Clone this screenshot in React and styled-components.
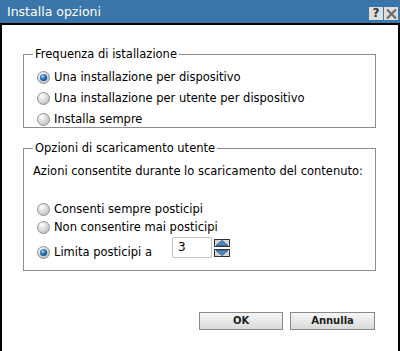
import React from "react";
import styled, { createGlobalStyle } from "styled-components";

const FONT = `"DejaVu Sans", Verdana, sans-serif`;

const FREQUENCY = [
  { label: "Una installazione per dispositivo", checked: true },
  { label: "Una installazione per utente per dispositivo", checked: false },
  { label: "Installa sempre", checked: false },
];

const DOWNLOAD = [
  { label: "Consenti sempre posticipi", checked: false },
  { label: "Non consentire mai posticipi", checked: false },
];

function Radio({ checked }) {
  return (
    <RadioIcon width="13" height="13" viewBox="0 0 13 13">
      <defs>
        <radialGradient id="ring" cx="0.35" cy="0.3" r="0.8">
          <stop offset="0" stopColor="#ffffff" />
          <stop offset="1" stopColor="#b9b9b9" />
        </radialGradient>
        <radialGradient id="dot" cx="0.4" cy="0.35" r="0.7">
          <stop offset="0" stopColor="#a9dcff" />
          <stop offset="0.45" stopColor="#2f7fc4" />
          <stop offset="1" stopColor="#0b3f78" />
        </radialGradient>
      </defs>
      <circle cx="6.5" cy="6.5" r="6" fill="url(#ring)" stroke="#929292" />
      {checked && <circle cx="6.5" cy="6.5" r="3.6" fill="url(#dot)" />}
    </RadioIcon>
  );
}

function Option({ label, checked }) {
  return (
    <OptionRow>
      <Radio checked={checked} />
      <span>{label}</span>
    </OptionRow>
  );
}

function Arrow({ up }) {
  return (
    <svg width="14" height="6" viewBox="0 0 14 6">
      <polygon
        points={up ? "7,0.5 13,5.5 1,5.5" : "1,0.5 13,0.5 7,5.5"}
        fill="#4b89c4"
        stroke="#2a5886"
        strokeWidth="0.8"
      />
    </svg>
  );
}

function App() {
  return (
    <>
      <GlobalStyle />
      <Window>
        <TitleBar>
          <Title>Installa opzioni</Title>
          <TitleButtons>
            <TitleButton>?</TitleButton>
            <TitleButton>
              <svg width="11" height="10" viewBox="0 0 11 10">
                <path d="M1 0.5 L10 9.5 M10 0.5 L1 9.5" stroke="#6d6d6d" strokeWidth="2.2" />
              </svg>
            </TitleButton>
          </TitleButtons>
        </TitleBar>

        <Body>
          <Group>
            <Legend>Frequenza di istallazione</Legend>
            <Options $gap={5}>
              {FREQUENCY.map((opt) => (
                <Option key={opt.label} {...opt} />
              ))}
            </Options>
          </Group>

          <Group $spaced>
            <Legend>Opzioni di scaricamento utente</Legend>
            <Note>Azioni consentite durante lo scaricamento del contenuto:</Note>
            <Options $gap={2} $top={22} $bottom={12}>
              {DOWNLOAD.map((opt) => (
                <Option key={opt.label} {...opt} />
              ))}
              <LimitRow>
                <LimitLabel>
                  <Radio checked />
                  <span>Limita posticipi a</span>
                </LimitLabel>
                <NumberInput>3</NumberInput>
                <Spinner>
                  <SpinButton>
                    <Arrow up />
                  </SpinButton>
                  <SpinButton>
                    <Arrow />
                  </SpinButton>
                </Spinner>
              </LimitRow>
            </Options>
          </Group>

          <Footer>
            <Button $width={84}>OK</Button>
            <Button $width={85}>Annulla</Button>
          </Footer>
        </Body>
      </Window>
    </>
  );
}

const GlobalStyle = createGlobalStyle`
  html, body {
    margin: 0;
    padding: 0;
    background: #fff;
  }

  body {
    font-family: ${FONT};
    font-size: 11.5px;
    color: #000;
  }
`;

const Window = styled.div`
  display: flex;
  flex-direction: column;
  width: 400px;
  height: 351px;
  overflow: hidden;
  background: #fff;
`;

const TitleBar = styled.div`
  display: flex;
  justify-content: space-between;
  align-items: center;
  flex-shrink: 0;
  height: 23px;
  padding: 0 2px 0 7px;
  background: #3a76a9;
  border-bottom: 2px solid #000;
`;

const Title = styled.div`
  font-size: 12.5px;
  color: #fff;
`;

const TitleButtons = styled.div`
  display: flex;
  gap: 1px;
  margin-top: 4px;
`;

const TitleButton = styled.div`
  display: flex;
  justify-content: center;
  align-items: center;
  width: 14px;
  height: 13px;
  background: #dedede;
  font-size: 12px;
  font-weight: 700;
  color: #333;
  line-height: 13px;
`;

const Body = styled.div`
  flex: 1;
  display: flex;
  flex-direction: column;
  padding: 22px 22px 0 21px;
  border-left: 2px solid #000;
  border-right: 2px solid #000;
`;

const Group = styled.fieldset`
  margin: ${(props) => (props.$spaced ? "13px" : "0")} 0 0;
  padding: 8px 0 0 9px;
  min-width: 0;
  border: 1px solid #8c8c8c;
`;

const Legend = styled.legend`
  padding: 0 2px;
  font-size: 11.5px;
  line-height: 14px;
`;

const Note = styled.div`
  height: 16px;
  line-height: 16px;
`;

const Options = styled.div`
  display: flex;
  flex-direction: column;
  gap: ${(props) => props.$gap}px;
  margin: ${(props) => props.$top || 0}px 0 0 4px;
  padding-bottom: ${(props) => props.$bottom || 0}px;
`;

const OptionRow = styled.label`
  display: flex;
  align-items: center;
  gap: 4px;
  height: 16px;
  line-height: 16px;
  white-space: nowrap;
`;

const RadioIcon = styled.svg`
  flex-shrink: 0;
`;

const LimitRow = styled.div`
  display: flex;
  align-items: center;
  height: 21px;
`;

const LimitLabel = styled(OptionRow)`
  align-self: flex-end;
  margin-bottom: -2px;
`;

const NumberInput = styled.div`
  box-sizing: border-box;
  width: 40px;
  height: 21px;
  margin-left: 20px;
  padding-left: 5px;
  border: 1px solid #bcc5cf;
  border-radius: 2px;
  font-size: 12px;
  line-height: 19px;
`;

const Spinner = styled.div`
  display: flex;
  flex-direction: column;
  gap: 2px;
  margin-left: 2px;
`;

const SpinButton = styled.div`
  box-sizing: border-box;
  display: flex;
  justify-content: center;
  align-items: center;
  width: 16px;
  height: 8px;
  background: #d6d6d6;
  border: 1px solid #333;
`;

const Footer = styled.div`
  display: flex;
  justify-content: flex-end;
  gap: 7px;
  margin-top: 41px;
  padding-right: 1px;
`;

const Button = styled.button`
  box-sizing: border-box;
  width: ${(props) => props.$width}px;
  height: 18px;
  padding: 0;
  border: 1px solid #8a8a8a;
  background: linear-gradient(#f6f6f6, #dadada);
  font-family: ${FONT};
  font-size: 10px;
  font-weight: 700;
  color: #1e1e1e;
  line-height: 16px;
`;

export default App;
